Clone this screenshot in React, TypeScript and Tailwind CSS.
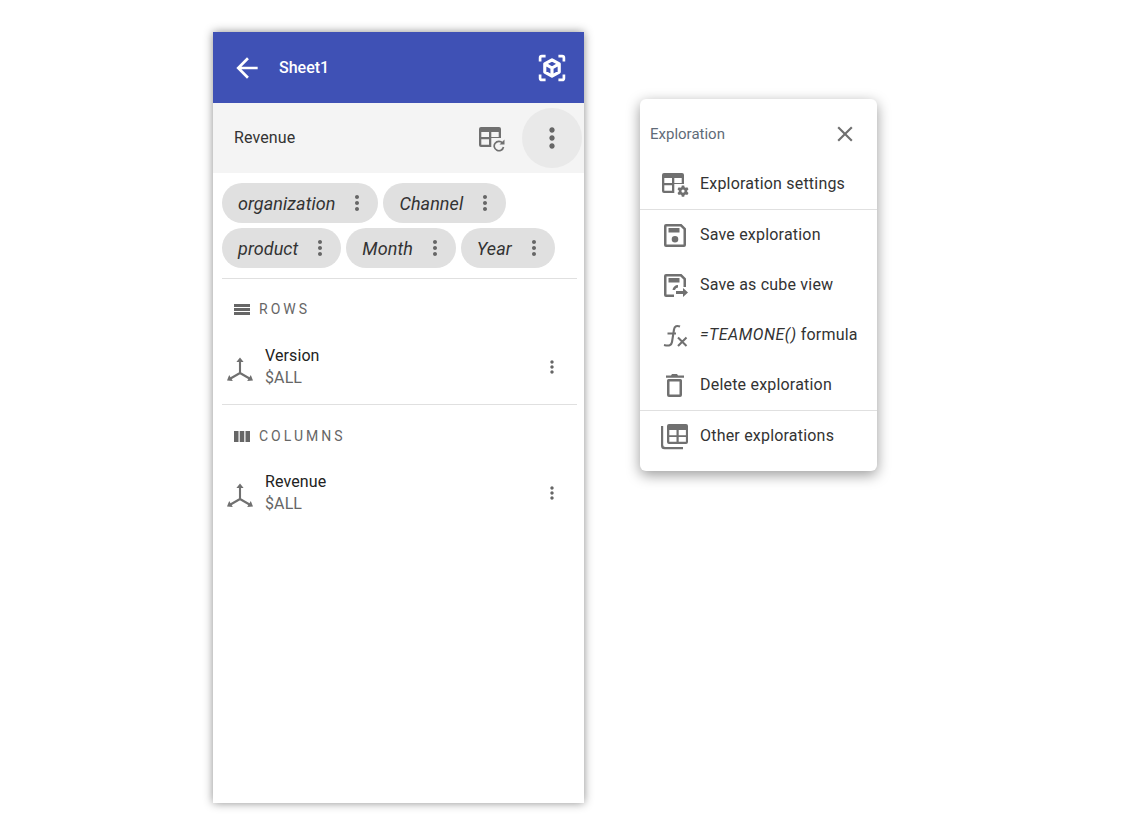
import { MdArrowBack, MdClose, MdMoreVert } from "react-icons/md"

const chipRows = [
  ["organization", "Channel"],
  ["product", "Month", "Year"],
]

// table outline with the bottom right cell left open for the small badge
const tablePath =
  "M3 3h18a2 2 0 0 1 2 2v9h-9.700v9H3a2 2 0 0 1-2-2V5a2 2 0 0 1 2-2Zm.300 5v5h7.700V8Zm10 0v5H20.700V8ZM3.300 15.300v5.400h7.700v-5.400Z"

function CubeIcon() {
  return (
    <svg viewBox="0 0 24 24" className="w-7 h-7 fill-none stroke-white">
      <path d="M1.800 6.500V3.300a1.500 1.500 0 0 1 1.500-1.500h3.200M17.500 1.800h3.200a1.500 1.500 0 0 1 1.500 1.500v3.200M22.200 17.500v3.200a1.500 1.500 0 0 1-1.500 1.500h-3.200M6.500 22.200H3.300a1.500 1.500 0 0 1-1.500-1.500v-3.200" strokeWidth="2.300" />
      <path d="m12 5 6.200 3.500v7L12 19l-6.200-3.500v-7ZM6.300 8.700 12 12l5.700-3.300M12 12v6.500" strokeWidth="2.700" strokeLinejoin="round" />
    </svg>
  )
}

function TableRefreshIcon() {
  return (
    <svg viewBox="0 0 28 28" className="w-7 h-7 fill-[#707070]">
      <path d={tablePath} fillRule="evenodd" />
      <path d="M24.500 19a4.700 4.700 0 1 0 1 4" fill="none" stroke="#707070" strokeWidth="1.700" />
      <path d="M26.500 15.500v5h-5Z" />
    </svg>
  )
}

function TableGearIcon() {
  return (
    <svg viewBox="0 0 28 28" className="w-7 h-7 fill-[#707070]">
      <path d={tablePath} fillRule="evenodd" />
      <path d="M20.800 15.500h2.400l.4 1.700 1.100.6 1.600-.5 1.200 2-1.300 1.200v1.200l1.300 1.200-1.200 2-1.600-.5-1.100.6-.4 1.700h-2.400l-.4-1.700-1.100-.6-1.600.5-1.200-2 1.300-1.200V20.500l-1.300-1.200 1.200-2 1.600.5 1.100-.6.4-1.700Zm1.200 4a1.600 1.600 0 1 0 0 3.200 1.600 1.600 0 0 0 0-3.200Z" fillRule="evenodd" />
    </svg>
  )
}

function AxesIcon() {
  return (
    <svg viewBox="0 0 28 28" className="w-7 h-7 mt-[5px] fill-[#707070] stroke-[#707070]">
      <path d="M14 5v12M14 17l-9.500 5.500M14 17l9.500 5.500" fill="none" strokeWidth="2.100" />
      <path d="m14 1.500 3.600 4.500h-7.200ZM1 24.500l2.200-5.600 3.600 6.200ZM27 24.500l-2.200-5.600-3.600 6.200Z" strokeWidth="0" />
    </svg>
  )
}

function RowsIcon() {
  return (
    <svg viewBox="0 0 16 11" className="w-4 h-[11px] fill-[#666]">
      <path d="M0 0h16v3H0zM0 4h16v3H0zM0 8h16v3H0z" />
    </svg>
  )
}

function ColumnsIcon() {
  return (
    <svg viewBox="0 0 16 11" className="w-4 h-[11px] fill-[#666]">
      <path d="M0 0h4.500v11H0zM5.750 0h4.500v11h-4.500zM11.500 0H16v11h-4.500z" />
    </svg>
  )
}

function SaveIcon() {
  return (
    <svg viewBox="0 0 28 28" className="w-7 h-7 fill-[#707070]">
      <path d="M5 3h15.500L25 7.500V24a2 2 0 0 1-2 2H5a2 2 0 0 1-2-2V5a2 2 0 0 1 2-2Zm.500 2.400v18.200h17V8.500L19.400 5.400ZM7.500 7h11v4.500h-11ZM14 15a3.300 3.300 0 1 1 0 6.600 3.300 3.300 0 0 1 0-6.600Z" fillRule="evenodd" />
    </svg>
  )
}

function SaveCubeIcon() {
  return (
    <svg viewBox="0 0 28 28" className="w-7 h-7 fill-[#707070]">
      <path d="M5 3h15.500L25 7.500V16h-2.500V8.500L19.400 5.400H5.500v18.200H13V26H5a2 2 0 0 1-2-2V5a2 2 0 0 1 2-2ZM7.500 7h11v4.500h-11Z" fillRule="evenodd" />
      <path d="M11.500 19a5.500 5.500 0 0 1 5.500-5v2.500a3.200 3.200 0 0 0-3 2.500Z" />
      <path d="M15 20h7v-3l5 4.500-5 4.500v-3h-7Z" />
    </svg>
  )
}

function FxIcon() {
  return (
    <svg viewBox="0 0 28 28" className="w-7 h-7 stroke-[#707070] fill-none">
      <path d="M19 5.500c-3-1.200-5.500-.5-6 3l-2 12.500c-.5 3.500-3 4.200-8 3M6.500 12.500h8.500" strokeWidth="2.100" />
      <path d="m17 16.500 8.500 8.500M25.500 16.500 17 25" strokeWidth="2.100" />
    </svg>
  )
}

function TrashIcon() {
  return (
    <svg viewBox="0 0 28 28" className="w-7 h-7 fill-[#707070]">
      <path d="M7.500 8h12a1.500 1.500 0 0 1 1.500 1.500V24a2 2 0 0 1-2 2H8a2 2 0 0 1-2-2V9.500A1.500 1.500 0 0 1 7.500 8Zm1 2.500v13h10v-13Z" fillRule="evenodd" />
      <path d="M5 4.500h5l1-1.500h5l1 1.500h6v2.200H5Z" />
    </svg>
  )
}

function OtherIcon() {
  return (
    <svg viewBox="0 0 28 28" className="w-7 h-7 fill-[#707070]">
      <path d="M8 2h17a2 2 0 0 1 2 2v16a2 2 0 0 1-2 2H8a2 2 0 0 1-2-2V4a2 2 0 0 1 2-2Zm.300 6v5.200h7.200V8Zm9.400 0v5.200h7.200V8ZM8.300 15v4.700h7.200V15Zm9.400 0v4.700h7.200V15Z" fillRule="evenodd" />
      <path d="M0 4h2.200v19a2 2 0 0 0 2 2H22v2.200H3.500A3.500 3.500 0 0 1 0 23.700Z" />
    </svg>
  )
}

function Chip({ label }: { label: string }) {
  return (
    <div className="h-10 rounded-[20px] bg-[#e0e0e0] flex items-center pl-4 pr-[9px]">
      <span className="text-[18px] italic tracking-[0.07px] text-[#333]">{label}</span>
      <MdMoreVert className="ml-[10px] text-[#666]" size={24} />
    </div>
  )
}

function DimensionRow({ name }: { name: string }) {
  return (
    <div className="h-[44px] flex items-center pl-[13px] pr-[22px]">
      <AxesIcon />
      <div className="ml-[11px] flex-1 leading-[22px] text-[16px] tracking-[0.1px]">
        <div className="text-[#222]">{name}</div>
        <div className="text-[#666]">$ALL</div>
      </div>
      <MdMoreVert className="text-[#666]" size={20} />
    </div>
  )
}

function MenuItem({ icon, children }: { icon: React.ReactNode; children: React.ReactNode }) {
  return (
    <div className="h-[50px] flex items-center pl-[21px] text-[16px] tracking-[0.2px] text-[#333]">
      <div className="w-7 h-7 shrink-0">{icon}</div>
      <div className="ml-[11px] whitespace-nowrap">{children}</div>
    </div>
  )
}

export default function App() {
  return (
    <div className="flex items-start gap-[56px] pl-[213px] pt-[32px] bg-white min-h-[837px] font-['Roboto',sans-serif]">
      <div className="w-[371px] h-[771px] bg-white shadow-[0_0_9px_rgba(0,0,0,0.45)] shrink-0">
        <div className="h-[71px] bg-[#3f51b5] flex items-center pl-[18px] pr-[12px] text-white">
          <MdArrowBack size={32} />
          <span className="ml-[16px] text-[16px] font-medium flex-1">Sheet1</span>
          <div className="w-10 h-10 flex items-center justify-center">
            <CubeIcon />
          </div>
        </div>

        <div className="h-[70px] bg-[#f4f4f4] flex items-center pl-[21px] pr-[2px]">
          <span className="flex-1 text-[16px] tracking-[0.1px] text-[#333]">Revenue</span>
          <TableRefreshIcon />
          <div className="ml-[16px] w-[60px] h-[60px] rounded-full bg-[#e9e9e9] flex items-center justify-center">
            <MdMoreVert className="text-[#666]" size={32} />
          </div>
        </div>

        <div className="pt-[10px] px-[9px]">
          <div className="flex flex-col gap-[5px]">
            {chipRows.map((row) => (
              <div key={row[0]} className="flex gap-[5px]">
                {row.map((chip) => (
                  <Chip key={chip} label={chip} />
                ))}
              </div>
            ))}
          </div>
          <div className="mt-[10px] mr-[-2px] h-px bg-[#e0e0e0]" />
        </div>

        <div className="h-[60px] flex items-center pl-[21px]">
          <RowsIcon />
          <span className="ml-[9px] text-[14px] tracking-[3px] text-[#666]">ROWS</span>
        </div>
        <div className="mt-[6px]">
          <DimensionRow name="Version" />
        </div>
        <div className="mt-[15px] ml-[9px] mr-[7px] h-px bg-[#e0e0e0]" />
        <div className="h-[62px] flex items-center pl-[21px]">
          <ColumnsIcon />
          <span className="ml-[9px] text-[14px] tracking-[3px] text-[#666]">COLUMNS</span>
        </div>
        <div className="mt-[4px]">
          <DimensionRow name="Revenue" />
        </div>
      </div>

      <div className="mt-[67px] w-[237px] h-[372px] bg-white rounded-[6px] shadow-[0_4px_14px_rgba(0,0,0,0.4)] shrink-0">
        <div className="h-[60px] pt-[10px] flex items-center pl-[10px] pr-[19px]">
          <span className="flex-1 text-[15px] text-[#5f6b78]">Exploration</span>
          <MdClose className="text-[#707070]" size={26} />
        </div>
        <MenuItem icon={<TableGearIcon />}>Exploration settings</MenuItem>
        <div className="h-px bg-[#e0e0e0]" />
        <MenuItem icon={<SaveIcon />}>Save exploration</MenuItem>
        <MenuItem icon={<SaveCubeIcon />}>Save as cube view</MenuItem>
        <MenuItem icon={<FxIcon />}>
          <i className="tracking-[0.5px]">=TEAMONE()</i> formula
        </MenuItem>
        <MenuItem icon={<TrashIcon />}>Delete exploration</MenuItem>
        <div className="h-px bg-[#e0e0e0]" />
        <MenuItem icon={<OtherIcon />}>Other explorations</MenuItem>
      </div>
    </div>
  )
}
